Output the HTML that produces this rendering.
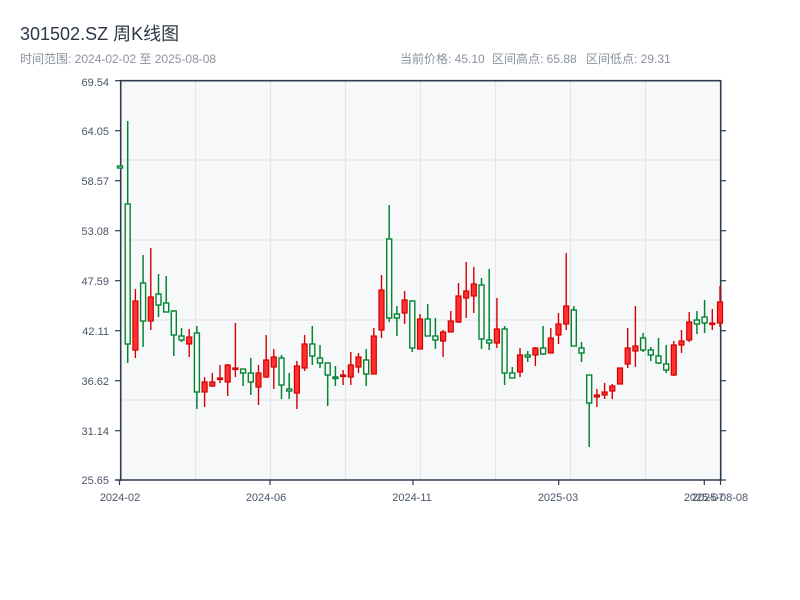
<!DOCTYPE html>
<html><head><meta charset="utf-8"><style>
html,body{margin:0;padding:0;background:#fff;width:800px;height:600px;overflow:hidden;font-family:"Liberation Sans","Noto Sans CJK SC",sans-serif;}
svg{position:absolute;left:0;top:0}
.r line{stroke:#d40000;stroke-width:1.4}
.r rect{fill:#ff3030;stroke:#d40000;stroke-width:1.2}
.g line{stroke:#038530;stroke-width:1.5}
.g rect{fill:#f7f8fa;stroke:#038530;stroke-width:1.4}
</style></head><body>
<svg width="800" height="600" xmlns="http://www.w3.org/2000/svg" font-family="Liberation Sans, Noto Sans CJK SC, sans-serif">
<text x="20" y="40" font-size="18" fill="#2d3748">301502.SZ 周K线图</text>
<text x="20" y="63" font-size="12" fill="#8a929e">时间范围: 2024-02-02 至 2025-08-08</text>
<text x="400" y="63" font-size="12" fill="#8a929e">当前价格: 45.10</text>
<text x="492" y="63" font-size="12" fill="#8a929e">区间高点: 65.88</text>
<text x="586" y="63" font-size="12" fill="#8a929e">区间低点: 29.31</text>
<rect x="121" y="81" width="599" height="399" fill="#f7f8fa"/>
<g stroke="#e2e5ea" stroke-width="1.2">
<line x1="121" y1="160" x2="720" y2="160"/><line x1="121" y1="240" x2="720" y2="240"/><line x1="121" y1="320" x2="720" y2="320"/><line x1="121" y1="400" x2="720" y2="400"/>
<line x1="195.5" y1="81" x2="195.5" y2="480"/><line x1="270.5" y1="81" x2="270.5" y2="480"/><line x1="345.5" y1="81" x2="345.5" y2="480"/><line x1="420.5" y1="81" x2="420.5" y2="480"/><line x1="495.5" y1="81" x2="495.5" y2="480"/><line x1="570.5" y1="81" x2="570.5" y2="480"/><line x1="645.5" y1="81" x2="645.5" y2="480"/>
</g>
<g stroke="#2d3b4e" stroke-width="1.6" fill="none">
<line x1="121" y1="80.7" x2="721" y2="80.7"/>
<line x1="720.7" y1="80" x2="720.7" y2="481"/>
<line x1="120.7" y1="80" x2="120.7" y2="481"/>
<line x1="115" y1="480" x2="721" y2="480"/>
</g>
<g stroke="#2d3b4e" stroke-width="1.2">
<line x1="115" y1="80.7" x2="120" y2="80.7"/><line x1="115" y1="130.7" x2="120" y2="130.7"/><line x1="115" y1="180.7" x2="120" y2="180.7"/><line x1="115" y1="230.7" x2="120" y2="230.7"/><line x1="115" y1="280.7" x2="120" y2="280.7"/><line x1="115" y1="330.7" x2="120" y2="330.7"/><line x1="115" y1="380.7" x2="120" y2="380.7"/><line x1="115" y1="430.7" x2="120" y2="430.7"/>
<line x1="721" y1="130.7" x2="726" y2="130.7"/><line x1="721" y1="180.7" x2="726" y2="180.7"/><line x1="721" y1="230.7" x2="726" y2="230.7"/><line x1="721" y1="280.7" x2="726" y2="280.7"/><line x1="721" y1="330.7" x2="726" y2="330.7"/><line x1="721" y1="380.7" x2="726" y2="380.7"/><line x1="721" y1="430.7" x2="726" y2="430.7"/><line x1="721" y1="480" x2="726" y2="480"/>
<line x1="119.5" y1="480" x2="119.5" y2="485"/><line x1="270" y1="480" x2="270" y2="485"/><line x1="413" y1="480" x2="413" y2="485"/><line x1="558.7" y1="480" x2="558.7" y2="485"/><line x1="704.3" y1="480" x2="704.3" y2="485"/><line x1="720.5" y1="480" x2="720.5" y2="485"/>
</g>
<g font-size="11" fill="#4a5568" text-anchor="end">
<text x="109" y="86">69.54</text><text x="109" y="135">64.05</text><text x="109" y="185">58.57</text><text x="109" y="235">53.08</text><text x="109" y="285">47.59</text><text x="109" y="335">42.11</text><text x="109" y="385">36.62</text><text x="109" y="435">31.14</text><text x="109" y="484">25.65</text>
</g>
<g font-size="11" fill="#4a5568" text-anchor="middle">
<text x="120" y="501">2024-02</text><text x="266" y="501">2024-06</text><text x="412" y="501">2024-11</text><text x="558" y="501">2025-03</text><text x="704" y="501">2025-07</text><text x="720" y="501">2025-08-08</text>
</g>
<g>
<g class="g"><line x1="120" y1="166" x2="120" y2="168.5"/><rect x="117.5" y="166" width="5" height="2"/></g>
<g class="g"><line x1="127.7" y1="121" x2="127.7" y2="363"/><rect x="125.2" y="204" width="5" height="140"/></g>
<g class="r"><line x1="135.4" y1="289" x2="135.4" y2="358"/><rect x="132.9" y="301" width="5" height="49"/></g>
<g class="g"><line x1="143.1" y1="255" x2="143.1" y2="347"/><rect x="140.6" y="283" width="5" height="38"/></g>
<g class="r"><line x1="150.8" y1="248" x2="150.8" y2="330"/><rect x="148.3" y="297" width="5" height="24"/></g>
<g class="g"><line x1="158.5" y1="274" x2="158.5" y2="317"/><rect x="156" y="294" width="5" height="11"/></g>
<g class="g"><line x1="166.2" y1="276" x2="166.2" y2="312"/><rect x="163.7" y="303" width="5" height="9"/></g>
<g class="g"><line x1="173.8" y1="310" x2="173.8" y2="356"/><rect x="171.3" y="311" width="5" height="24"/></g>
<g class="g"><line x1="181.5" y1="328" x2="181.5" y2="342"/><rect x="179" y="336" width="5" height="4"/></g>
<g class="r"><line x1="189.2" y1="329" x2="189.2" y2="357"/><rect x="186.7" y="337" width="5" height="7"/></g>
<g class="g"><line x1="196.9" y1="326" x2="196.9" y2="409"/><rect x="194.4" y="333" width="5" height="59"/></g>
<g class="r"><line x1="204.6" y1="377" x2="204.6" y2="407"/><rect x="202.1" y="382" width="5" height="10"/></g>
<g class="r"><line x1="212.3" y1="373" x2="212.3" y2="387"/><rect x="209.8" y="382" width="5" height="4"/></g>
<g class="r"><line x1="220" y1="365" x2="220" y2="383"/><rect x="217.5" y="378" width="5" height="1.5"/></g>
<g class="r"><line x1="227.7" y1="364" x2="227.7" y2="396"/><rect x="225.2" y="365" width="5" height="17"/></g>
<g class="r"><line x1="235.4" y1="323" x2="235.4" y2="377"/><rect x="232.9" y="368" width="5" height="1.5"/></g>
<g class="g"><line x1="243.1" y1="369" x2="243.1" y2="386"/><rect x="240.6" y="369" width="5" height="4"/></g>
<g class="g"><line x1="250.8" y1="358" x2="250.8" y2="395"/><rect x="248.3" y="373" width="5" height="9"/></g>
<g class="r"><line x1="258.5" y1="365" x2="258.5" y2="405"/><rect x="256" y="373" width="5" height="14"/></g>
<g class="r"><line x1="266.2" y1="335" x2="266.2" y2="378"/><rect x="263.7" y="360" width="5" height="17"/></g>
<g class="r"><line x1="273.8" y1="349" x2="273.8" y2="389"/><rect x="271.3" y="357" width="5" height="10"/></g>
<g class="g"><line x1="281.5" y1="355" x2="281.5" y2="399"/><rect x="279" y="358" width="5" height="27"/></g>
<g class="g"><line x1="289.2" y1="373" x2="289.2" y2="399"/><rect x="286.7" y="389" width="5" height="2"/></g>
<g class="r"><line x1="296.9" y1="361" x2="296.9" y2="409"/><rect x="294.4" y="366" width="5" height="27"/></g>
<g class="r"><line x1="304.6" y1="335" x2="304.6" y2="371"/><rect x="302.1" y="344" width="5" height="24"/></g>
<g class="g"><line x1="312.3" y1="326" x2="312.3" y2="365"/><rect x="309.8" y="344" width="5" height="12"/></g>
<g class="g"><line x1="320" y1="345" x2="320" y2="368"/><rect x="317.5" y="358" width="5" height="5"/></g>
<g class="g"><line x1="327.7" y1="363" x2="327.7" y2="406"/><rect x="325.2" y="363" width="5" height="12"/></g>
<g class="g"><line x1="335.4" y1="366" x2="335.4" y2="386"/><rect x="332.9" y="377" width="5" height="1.5"/></g>
<g class="r"><line x1="343.1" y1="370" x2="343.1" y2="385"/><rect x="340.6" y="375" width="5" height="1.5"/></g>
<g class="r"><line x1="350.8" y1="352" x2="350.8" y2="385"/><rect x="348.3" y="365" width="5" height="12"/></g>
<g class="r"><line x1="358.5" y1="353" x2="358.5" y2="373"/><rect x="356" y="357" width="5" height="10"/></g>
<g class="g"><line x1="366.2" y1="349" x2="366.2" y2="386"/><rect x="363.7" y="360" width="5" height="14"/></g>
<g class="r"><line x1="373.8" y1="328" x2="373.8" y2="374"/><rect x="371.3" y="336" width="5" height="38"/></g>
<g class="r"><line x1="381.5" y1="275" x2="381.5" y2="338"/><rect x="379" y="290" width="5" height="40"/></g>
<g class="g"><line x1="389.2" y1="205" x2="389.2" y2="322"/><rect x="386.7" y="239" width="5" height="79"/></g>
<g class="g"><line x1="396.9" y1="306" x2="396.9" y2="336"/><rect x="394.4" y="314" width="5" height="4"/></g>
<g class="r"><line x1="404.6" y1="291" x2="404.6" y2="324"/><rect x="402.1" y="300" width="5" height="13"/></g>
<g class="g"><line x1="412.3" y1="300" x2="412.3" y2="352"/><rect x="409.8" y="301" width="5" height="47"/></g>
<g class="r"><line x1="420" y1="314" x2="420" y2="349"/><rect x="417.5" y="319" width="5" height="30"/></g>
<g class="g"><line x1="427.7" y1="304" x2="427.7" y2="336"/><rect x="425.2" y="319" width="5" height="17"/></g>
<g class="g"><line x1="435.4" y1="318" x2="435.4" y2="349"/><rect x="432.9" y="336" width="5" height="4"/></g>
<g class="r"><line x1="443.1" y1="330" x2="443.1" y2="357"/><rect x="440.6" y="332" width="5" height="9"/></g>
<g class="r"><line x1="450.8" y1="311" x2="450.8" y2="332"/><rect x="448.3" y="321" width="5" height="11"/></g>
<g class="r"><line x1="458.5" y1="283" x2="458.5" y2="323"/><rect x="456" y="296" width="5" height="26"/></g>
<g class="r"><line x1="466.2" y1="262" x2="466.2" y2="318"/><rect x="463.7" y="291" width="5" height="7"/></g>
<g class="r"><line x1="473.8" y1="267" x2="473.8" y2="313"/><rect x="471.3" y="284" width="5" height="12"/></g>
<g class="g"><line x1="481.5" y1="278" x2="481.5" y2="349"/><rect x="479" y="285" width="5" height="54"/></g>
<g class="g"><line x1="489.2" y1="269" x2="489.2" y2="350"/><rect x="486.7" y="340" width="5" height="3"/></g>
<g class="r"><line x1="496.9" y1="298" x2="496.9" y2="348"/><rect x="494.4" y="329" width="5" height="14"/></g>
<g class="g"><line x1="504.6" y1="326" x2="504.6" y2="385"/><rect x="502.1" y="329" width="5" height="44"/></g>
<g class="g"><line x1="512.3" y1="367" x2="512.3" y2="378"/><rect x="509.8" y="373" width="5" height="5"/></g>
<g class="r"><line x1="520" y1="348" x2="520" y2="377"/><rect x="517.5" y="355" width="5" height="17"/></g>
<g class="g"><line x1="527.7" y1="351" x2="527.7" y2="362"/><rect x="525.2" y="355" width="5" height="2"/></g>
<g class="r"><line x1="535.4" y1="347" x2="535.4" y2="366"/><rect x="532.9" y="348" width="5" height="7"/></g>
<g class="g"><line x1="543.1" y1="326" x2="543.1" y2="355"/><rect x="540.6" y="348" width="5" height="6"/></g>
<g class="r"><line x1="550.8" y1="328" x2="550.8" y2="353"/><rect x="548.3" y="338" width="5" height="15"/></g>
<g class="r"><line x1="558.5" y1="313" x2="558.5" y2="344"/><rect x="556" y="324" width="5" height="11"/></g>
<g class="r"><line x1="566.2" y1="253" x2="566.2" y2="330"/><rect x="563.7" y="306" width="5" height="18"/></g>
<g class="g"><line x1="573.8" y1="306" x2="573.8" y2="346"/><rect x="571.3" y="310" width="5" height="36"/></g>
<g class="g"><line x1="581.5" y1="342" x2="581.5" y2="362"/><rect x="579" y="348" width="5" height="5"/></g>
<g class="g"><line x1="589.2" y1="375" x2="589.2" y2="447"/><rect x="586.7" y="375" width="5" height="28"/></g>
<g class="r"><line x1="596.9" y1="389" x2="596.9" y2="407"/><rect x="594.4" y="395" width="5" height="2"/></g>
<g class="r"><line x1="604.6" y1="383" x2="604.6" y2="399"/><rect x="602.1" y="392" width="5" height="3"/></g>
<g class="r"><line x1="612.3" y1="384" x2="612.3" y2="399"/><rect x="609.8" y="386" width="5" height="5"/></g>
<g class="r"><line x1="620" y1="368" x2="620" y2="384"/><rect x="617.5" y="368" width="5" height="16"/></g>
<g class="r"><line x1="627.7" y1="328" x2="627.7" y2="368"/><rect x="625.2" y="348" width="5" height="16"/></g>
<g class="r"><line x1="635.4" y1="306" x2="635.4" y2="367"/><rect x="632.9" y="346" width="5" height="5"/></g>
<g class="g"><line x1="643.1" y1="333" x2="643.1" y2="352"/><rect x="640.6" y="338" width="5" height="12"/></g>
<g class="g"><line x1="650.8" y1="347" x2="650.8" y2="361"/><rect x="648.3" y="350" width="5" height="5"/></g>
<g class="g"><line x1="658.5" y1="338" x2="658.5" y2="364"/><rect x="656" y="356" width="5" height="7"/></g>
<g class="g"><line x1="666.2" y1="345" x2="666.2" y2="373"/><rect x="663.7" y="364" width="5" height="6"/></g>
<g class="r"><line x1="673.8" y1="341" x2="673.8" y2="376"/><rect x="671.3" y="345" width="5" height="30"/></g>
<g class="r"><line x1="681.5" y1="330" x2="681.5" y2="353"/><rect x="679" y="341" width="5" height="4"/></g>
<g class="r"><line x1="689.2" y1="312" x2="689.2" y2="342"/><rect x="686.7" y="322" width="5" height="18"/></g>
<g class="g"><line x1="696.9" y1="311" x2="696.9" y2="334"/><rect x="694.4" y="320" width="5" height="4"/></g>
<g class="g"><line x1="704.6" y1="300" x2="704.6" y2="333"/><rect x="702.1" y="317" width="5" height="6"/></g>
<g class="r"><line x1="712.3" y1="309" x2="712.3" y2="330"/><rect x="709.8" y="323" width="5" height="1.5"/></g>
<g class="r"><line x1="720" y1="286" x2="720" y2="327"/><rect x="717.5" y="302" width="5" height="21"/></g>
</g>
</svg>
</body></html>
